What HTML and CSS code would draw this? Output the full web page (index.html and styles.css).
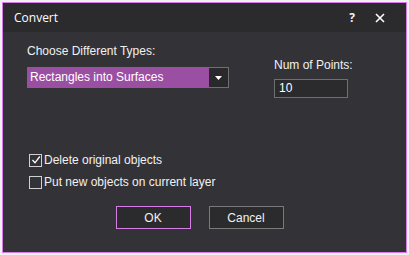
FILE: index.html
```html
<!DOCTYPE html>
<html lang="en">
<head>
    <meta charset="UTF-8">
    <title>Convert</title>
    <link rel="stylesheet" href="styles.css">
</head>
<body>
    <div class="dialog">
        <div class="title-bar">
            <span class="title">Convert</span>
            <div class="title-buttons">
                <span class="help">?</span>
                <svg class="close" width="10" height="10" viewBox="0 0 10 10">
                    <path d="M1 1 L9 9 M9 1 L1 9" stroke="#ffffff" stroke-width="1.6"/>
                </svg>
            </div>
        </div>

        <div class="dialog-body">
            <div class="top-row">
                <div class="type-group">
                    <label class="label">Choose Different Types:</label>
                    <div class="select">
                        <span class="select-value">Rectangles into Surfaces</span>
                        <span class="select-arrow">
                            <svg width="7" height="4" viewBox="0 0 7 4"><path d="M0 0 H7 L3.5 4 Z" fill="#ffffff"/></svg>
                        </span>
                    </div>
                </div>
                <div class="points-group">
                    <label class="label">Num of Points:</label>
                    <div class="text-input">10</div>
                </div>
            </div>

            <div class="options">
                <div class="check-row">
                    <span class="checkbox">
                        <svg width="10" height="10" viewBox="0 0 10 10"><path d="M1.5 5 L4 7.8 L8.8 1.5" fill="none" stroke="#ffffff" stroke-width="1.3"/></svg>
                    </span>
                    <span>Delete original objects</span>
                </div>
                <div class="check-row">
                    <span class="checkbox"></span>
                    <span>Put new objects on current layer</span>
                </div>
            </div>

            <div class="actions">
                <button class="btn btn-default">OK</button>
                <button class="btn">Cancel</button>
            </div>
        </div>
    </div>
</body>
</html>
```

FILE: styles.css
```css
body {
    margin: 0;
    padding: 2px;
    background-color: #f0f0f0;
    font-family: "Liberation Sans", Arial, sans-serif;
    font-size: 12px;
}

.dialog {
    width: 403px;
    height: 249px;
    border: 1px solid #d77ce8;
    background-color: #333337;
    color: #f1f1f1;
    display: flex;
    flex-direction: column;
}

.title-bar {
    height: 29px;
    background-color: #2b2b2e;
    display: flex;
    align-items: center;
    justify-content: space-between;
    padding: 0 21px 0 11px;
}

.title {
    font-family: "Open Sans", "Noto Sans", sans-serif;
    font-size: 12px;
    color: #ffffff;
}

.title-buttons {
    display: flex;
    align-items: center;
    gap: 20px;
}

.help {
    font-family: "Open Sans", sans-serif;
    font-weight: bold;
    font-size: 12px;
}

.close {
    display: block;
}

.dialog-body {
    flex: 1;
    padding: 12px 24px 0 24px;
    display: flex;
    flex-direction: column;
}

.top-row {
    display: flex;
}

.type-group {
    width: 202px;
}

.label {
    display: block;
    color: #f1f1f1;
}

.select {
    margin-top: 9px;
    height: 19px;
    border: 1px solid #6f6f6f;
    display: flex;
    background-color: #9b4fa3;
}

.select-value {
    flex: 1;
    padding-left: 2px;
    line-height: 19px;
    color: #ffffff;
}

.select-arrow {
    width: 19px;
    background-color: #29292b;
    display: flex;
    align-items: center;
    justify-content: center;
}

.points-group {
    margin-left: 45px;
    padding-top: 14px;
}

.text-input {
    margin-top: 7px;
    width: 68px;
    height: 17px;
    border: 1px solid #6f6f6f;
    background-color: #2b2b2e;
    padding-left: 4px;
    line-height: 17px;
    color: #ffffff;
}

.options {
    margin-top: 55px;
    display: flex;
    flex-direction: column;
    gap: 8px;
}

.check-row {
    display: flex;
    align-items: center;
    gap: 2px;
    padding-left: 2px;
}

.checkbox {
    width: 11px;
    height: 11px;
    border: 1px solid #d0d0d0;
    display: flex;
    align-items: center;
    justify-content: center;
}

.actions {
    margin-top: 17px;
    display: flex;
    justify-content: center;
    gap: 18px;
    padding-right: 10px;
}

.btn {
    width: 75px;
    height: 23px;
    border: 1px solid #7a7a7a;
    background-color: #2b2b2e;
    color: #f1f1f1;
    font-family: "Liberation Sans", Arial, sans-serif;
    font-size: 12px;
}

.btn-default {
    border-color: #d77ce8;
}
```
